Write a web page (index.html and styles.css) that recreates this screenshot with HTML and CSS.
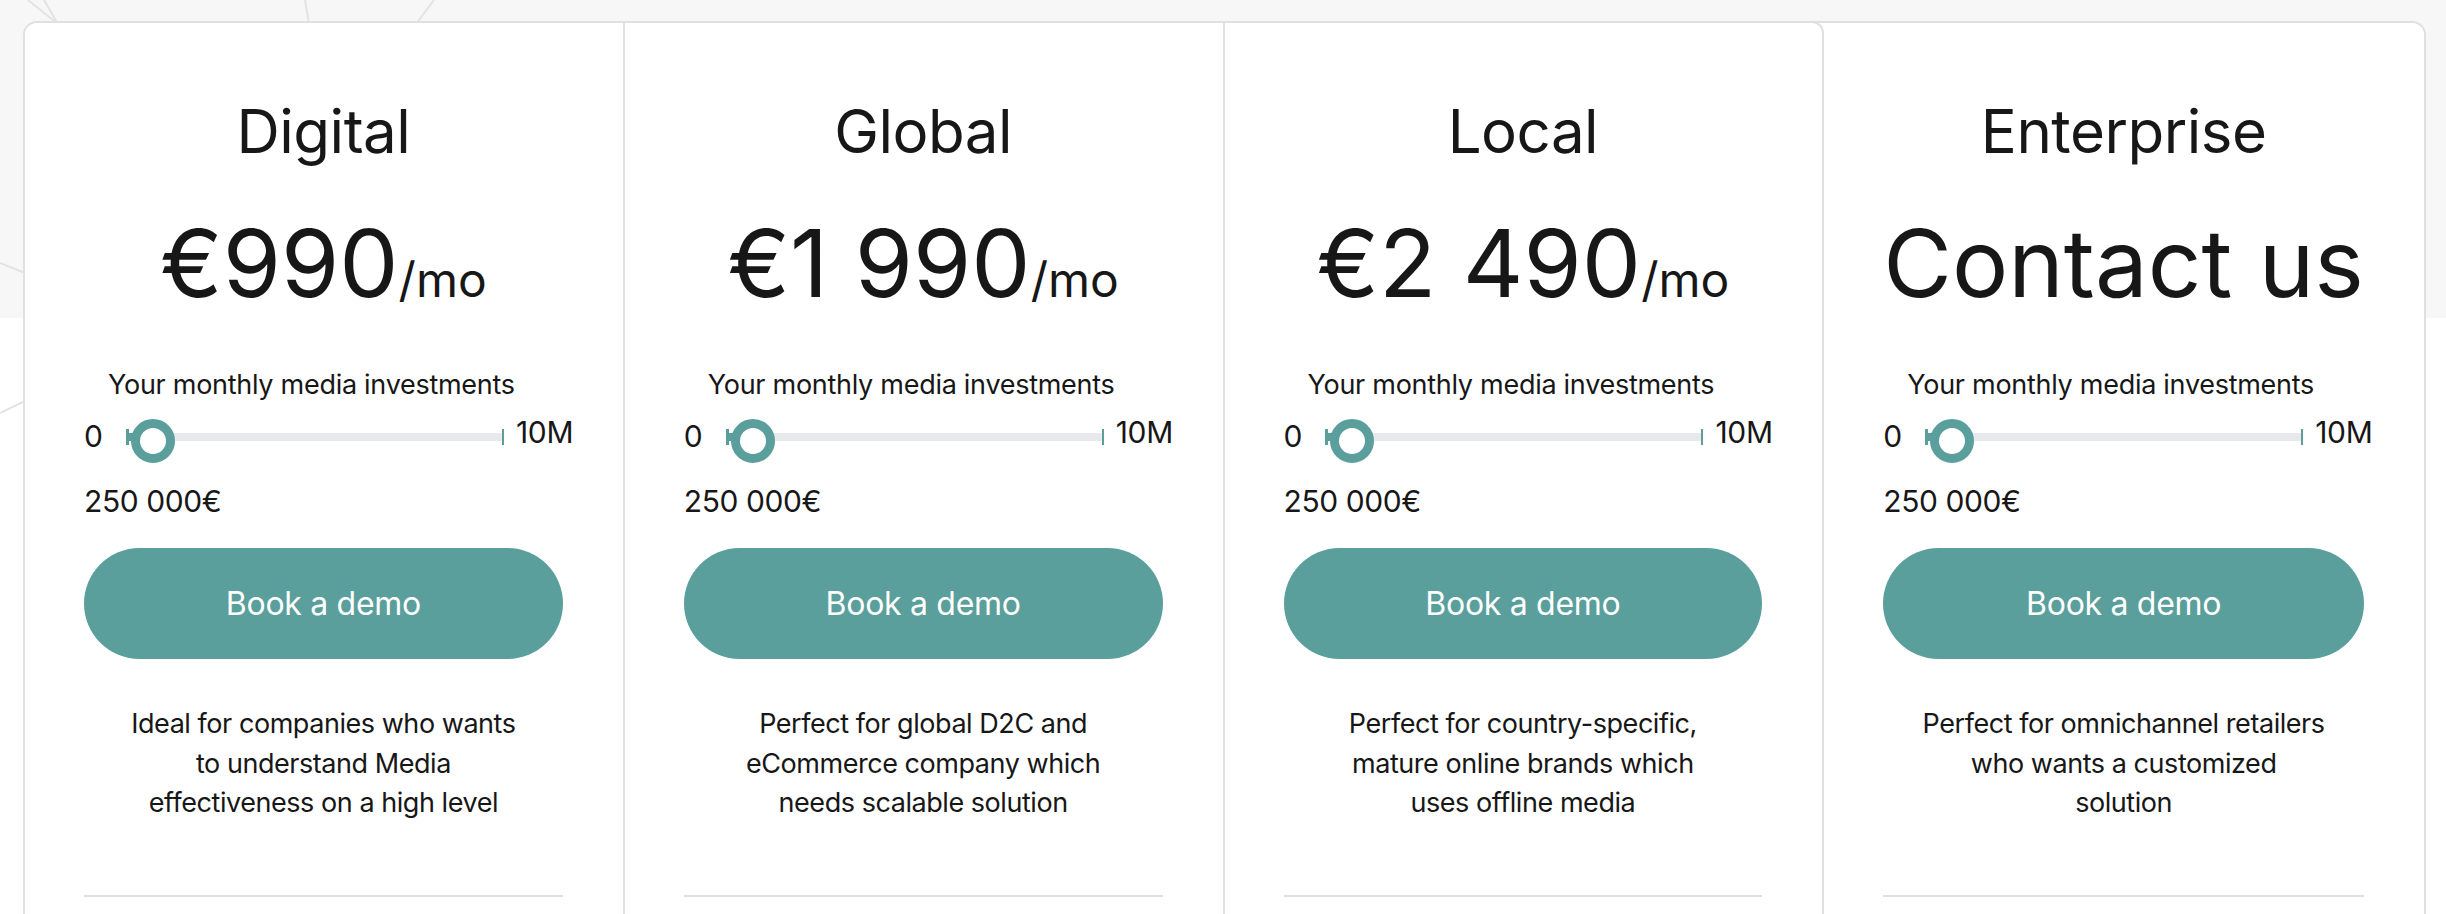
FILE: index.html
```html
<!DOCTYPE html>
<html lang="en">
<head>
<meta charset="utf-8">
<title>Pricing</title>
<link rel="stylesheet" href="styles.css">
</head>
<body>
<main class="pricing">
  <section class="plan">
    <h2 class="plan-name">Digital</h2>
    <div class="plan-price"><span class="amount">€990</span><span class="per">/mo</span></div>
    <div class="invest-label">Your monthly media investments</div>
    <div class="range-row">
      <span class="range-min">0</span>
      <div class="range"><div class="range-fill"></div><div class="range-thumb"></div></div>
      <span class="range-max">10M</span>
    </div>
    <div class="invest-value">250 000€</div>
    <a class="btn" href="#">Book a demo</a>
    <p class="plan-desc">Ideal for companies who wants<br>to understand Media<br>effectiveness on a high level</p>
    <hr class="divider">
  </section>
  <section class="plan">
    <h2 class="plan-name">Global</h2>
    <div class="plan-price"><span class="amount">€1 990</span><span class="per">/mo</span></div>
    <div class="invest-label">Your monthly media investments</div>
    <div class="range-row">
      <span class="range-min">0</span>
      <div class="range"><div class="range-fill"></div><div class="range-thumb"></div></div>
      <span class="range-max">10M</span>
    </div>
    <div class="invest-value">250 000€</div>
    <a class="btn" href="#">Book a demo</a>
    <p class="plan-desc">Perfect for global D2C and<br>eCommerce company which<br>needs scalable solution</p>
    <hr class="divider">
  </section>
  <section class="plan plan-third">
    <h2 class="plan-name">Local</h2>
    <div class="plan-price"><span class="amount">€2 490</span><span class="per">/mo</span></div>
    <div class="invest-label">Your monthly media investments</div>
    <div class="range-row">
      <span class="range-min">0</span>
      <div class="range"><div class="range-fill"></div><div class="range-thumb"></div></div>
      <span class="range-max">10M</span>
    </div>
    <div class="invest-value">250 000€</div>
    <a class="btn" href="#">Book a demo</a>
    <p class="plan-desc">Perfect for country-specific,<br>mature online brands which<br>uses offline media</p>
    <hr class="divider">
  </section>
  <section class="plan plan-last">
    <h2 class="plan-name">Enterprise</h2>
    <div class="plan-price"><span class="amount">Contact us</span></div>
    <div class="invest-label">Your monthly media investments</div>
    <div class="range-row">
      <span class="range-min">0</span>
      <div class="range"><div class="range-fill"></div><div class="range-thumb"></div></div>
      <span class="range-max">10M</span>
    </div>
    <div class="invest-value">250 000€</div>
    <a class="btn" href="#">Book a demo</a>
    <p class="plan-desc">Perfect for omnichannel retailers<br>who wants a customized<br>solution</p>
    <hr class="divider">
  </section>
</main>
</body>
</html>
```
FILE: styles.css
```css
* { box-sizing: border-box; }

html, body { height: 100%; }

body {
  margin: 0;
  font-family: Inter, "Noto Sans", "Liberation Sans", sans-serif;
  color: #171717;
  background-color: #ffffff;
  background-image:
    url("data:image/svg+xml,%3Csvg xmlns='http://www.w3.org/2000/svg' width='2446' height='914'%3E%3Cg stroke='%23e2e4e2' stroke-width='2' fill='none'%3E%3Cpath d='M28 0 L58 24 M44 0 L58 24 M305 0 L309 24 M434 0 L416 24 M0 263 L25 273 M0 413 L25 401'/%3E%3C/g%3E%3C/svg%3E"),
    linear-gradient(#f6f7f6 0, #f6f7f6 318px, #ffffff 318px);
  background-repeat: no-repeat;
  overflow: hidden;
}

.pricing {
  display: grid;
  grid-template-columns: repeat(4, 1fr);
  margin: 21px 20px 0 23px;
  border: 2px solid #e0e0e0;
  border-bottom: 0;
  border-radius: 14px 14px 0 0;
  background: #ffffff;
}

.plan {
  display: flex;
  flex-direction: column;
  padding: 72px 60px 80px 59px;
  border-right: 2px solid #e0e0e0;
  background: #ffffff;
}

.plan:first-child { border-top-left-radius: 12px; }

.plan-third {
  margin-top: -2px;
  border-top: 2px solid #e0e0e0;
  border-top-right-radius: 12px;
}

.plan-last { border-right: 0; border-top-right-radius: 12px; }

.plan-name {
  margin: 0;
  font-size: 60px;
  line-height: 72px;
  font-weight: 400;
  text-align: center;
  letter-spacing: -0.5px;
}

.plan-price {
  margin-top: 40px;
  height: 113px;
  font-size: 94px;
  line-height: 113px;
  text-align: center;
  white-space: nowrap;
}

.per {
  font-size: 48px;
  line-height: 1;
}

.invest-label {
  margin: 49px 0 0 24px;
  font-size: 27px;
  line-height: 32px;
  letter-spacing: -0.28px;
}

.range-row {
  display: flex;
  align-items: flex-start;
  margin-top: 13px;
  margin-right: -20px;
}

.range-min,
.range-max {
  font-size: 30px;
  line-height: 36px;
}

.range-min { margin-top: 4px; }

.range-max { margin-left: 12px; letter-spacing: -0.3px; }

.range {
  position: relative;
  flex: none;
  width: 378px;
  height: 8px;
  margin: 19px 0 0 23px;
  background: #e8e9ed;
}

.range::before,
.range::after {
  content: "";
  position: absolute;
  top: -4px;
  width: 3px;
  height: 16px;
  background: #5a9f9c;
}

.range::before { left: 0; }
.range::after { right: 0; width: 2px; }

.range-fill {
  position: absolute;
  left: 0;
  top: 0;
  width: 14px;
  height: 8px;
  background: #5a9f9c;
}

.range-thumb {
  position: absolute;
  left: 5px;
  top: -14px;
  width: 44px;
  height: 44px;
  border: 9px solid #5a9f9c;
  border-radius: 50%;
  background: #ffffff;
}

.invest-value {
  margin-top: 29px;
  font-size: 30px;
  line-height: 36px;
  letter-spacing: -0.4px;
}

.btn {
  display: flex;
  align-items: center;
  justify-content: center;
  margin-top: 29px;
  height: 111px;
  border-radius: 56px;
  background: #5a9f9c;
  color: #ffffff;
  font-size: 32px;
  letter-spacing: -0.3px;
  text-decoration: none;
}

.plan-desc {
  margin: 45px 0 0;
  font-size: 27px;
  line-height: 39.5px;
  text-align: center;
  letter-spacing: -0.45px;
}

.divider {
  margin: 72px 0 0;
  height: 2px;
  border: 0;
  background: #e0e0e0;
}
```
